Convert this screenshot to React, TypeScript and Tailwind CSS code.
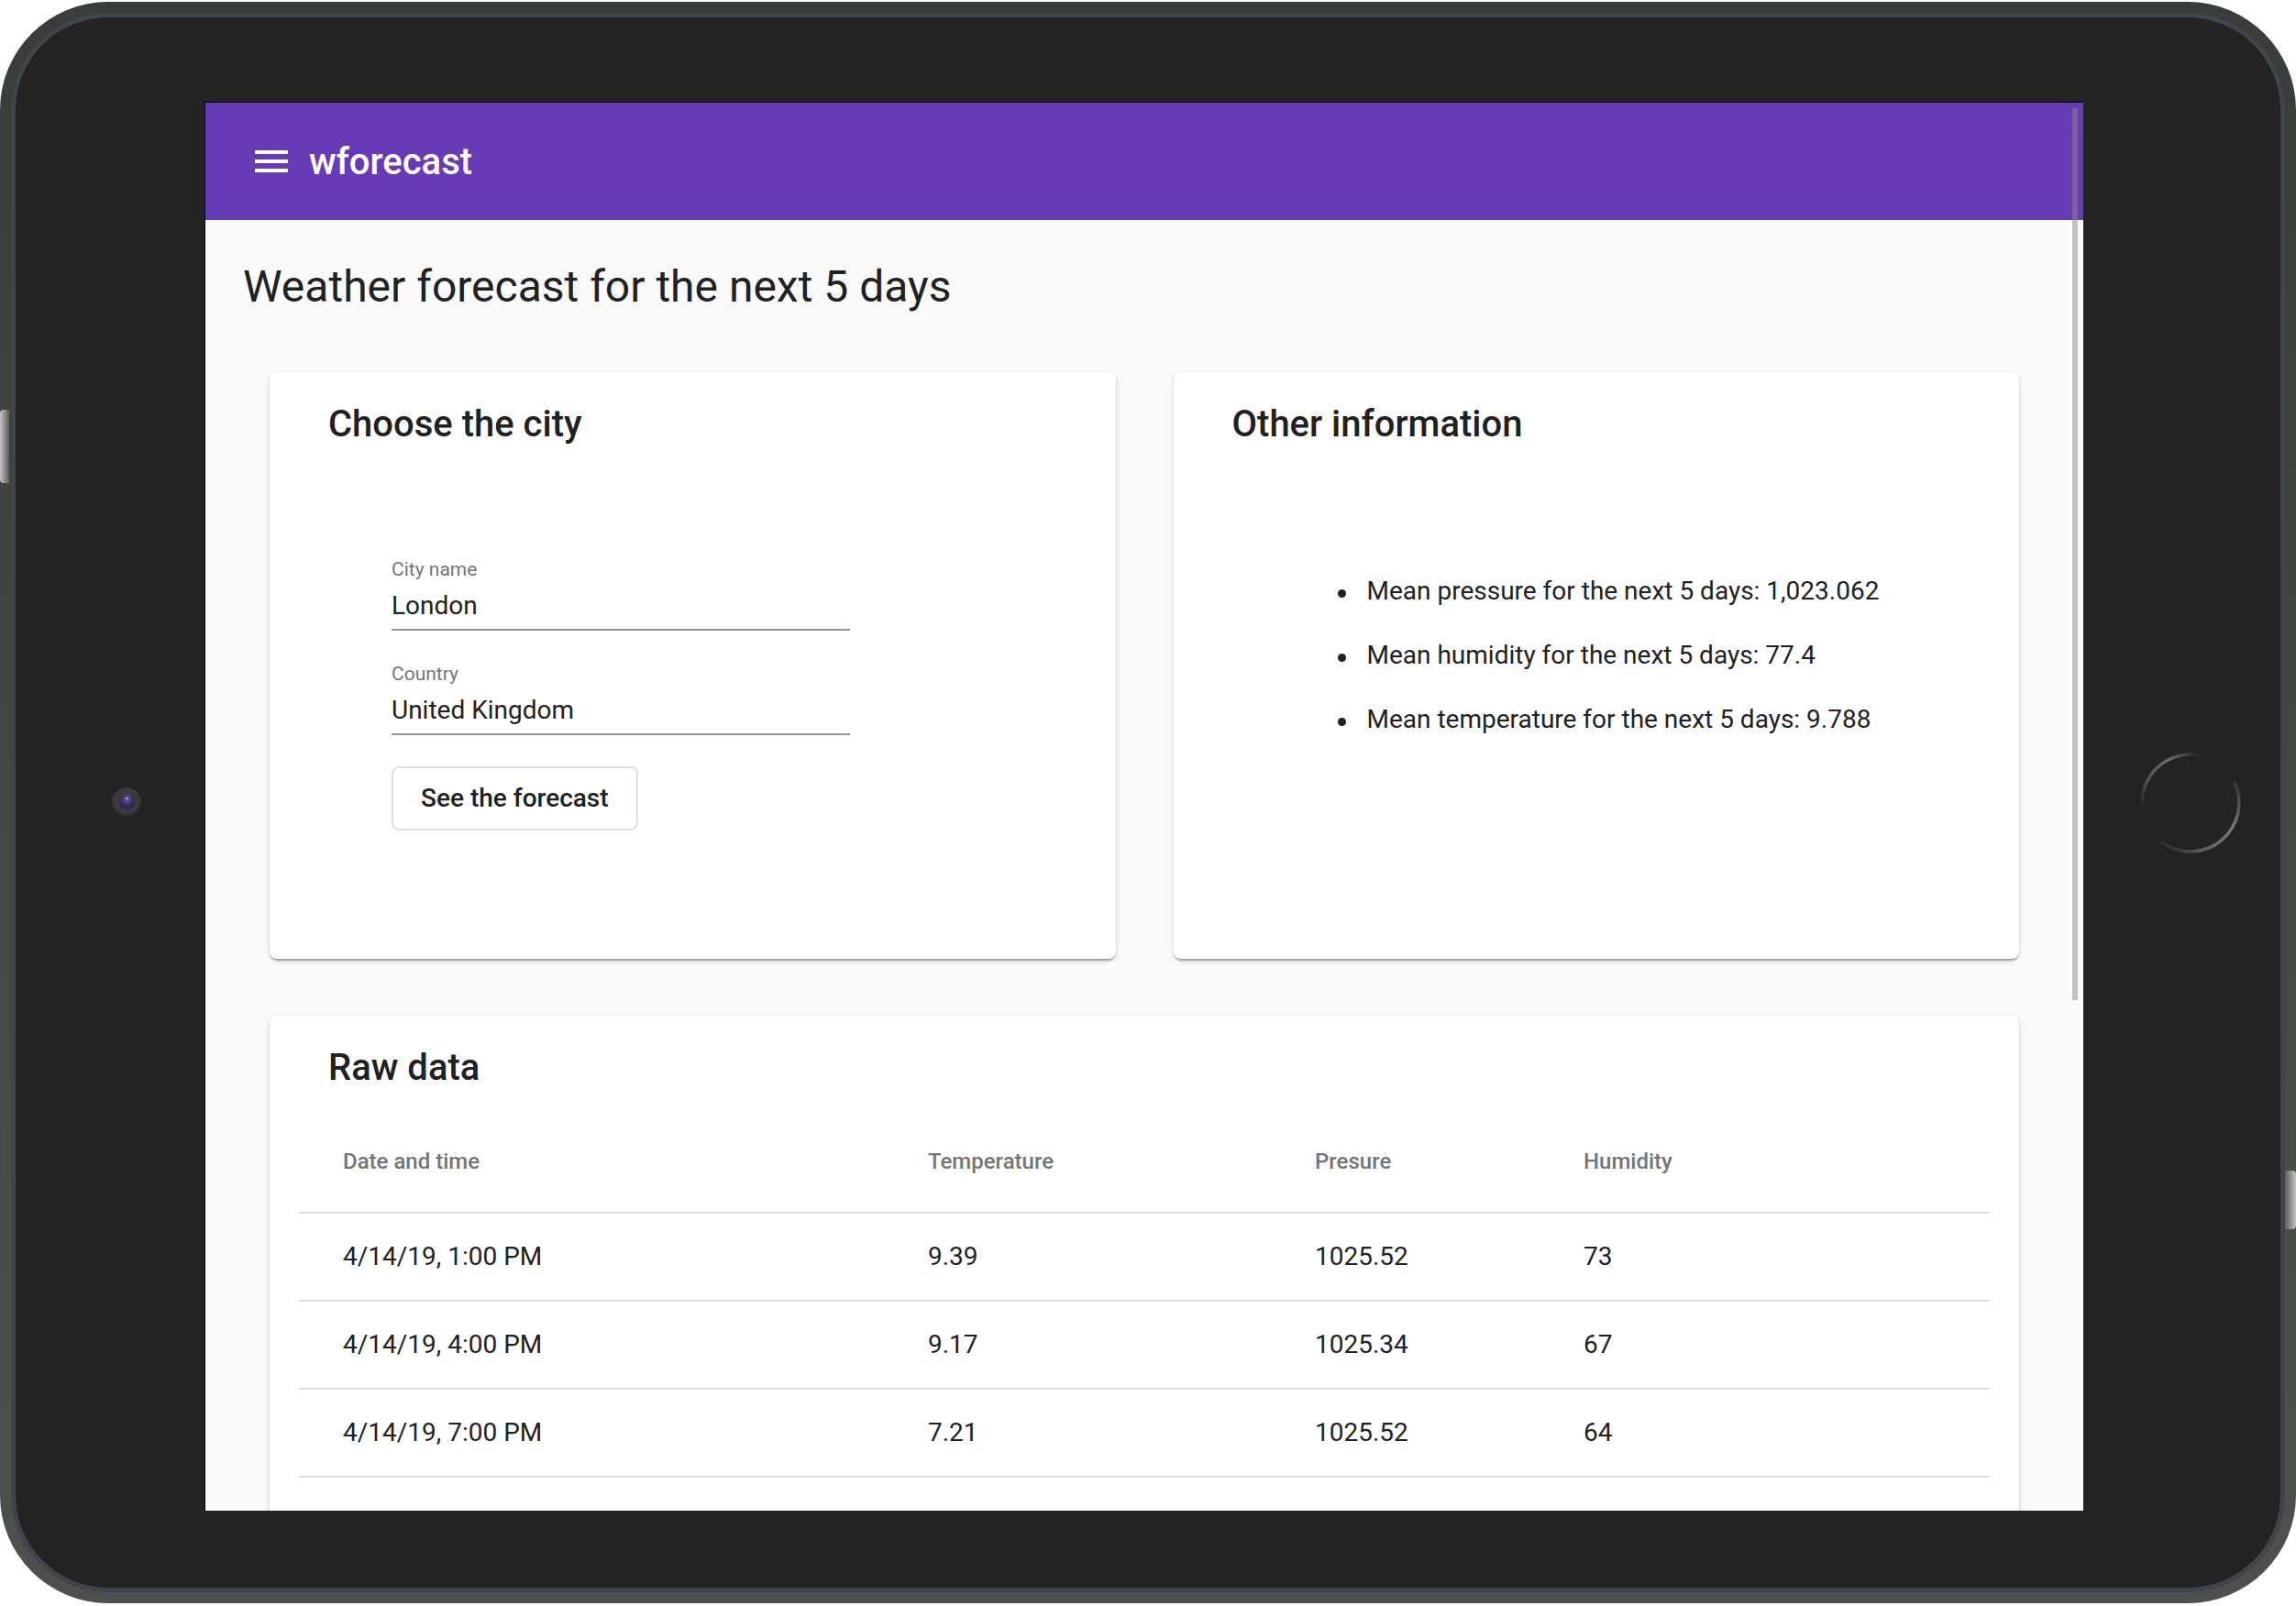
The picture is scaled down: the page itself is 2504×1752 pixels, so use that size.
import React from "react";

const rows = [
  { date: "4/14/19, 1:00 PM", temp: "9.39", pressure: "1025.52", humidity: "73" },
  { date: "4/14/19, 4:00 PM", temp: "9.17", pressure: "1025.34", humidity: "67" },
  { date: "4/14/19, 7:00 PM", temp: "7.21", pressure: "1025.52", humidity: "64" },
  { date: "4/14/19, 10:00 PM", temp: "6.48", pressure: "1025.91", humidity: "72" },
];

const info = [
  "Mean pressure for the next 5 days: 1,023.062",
  "Mean humidity for the next 5 days: 77.4",
  "Mean temperature for the next 5 days: 9.788",
];

const cardClass =
  "bg-white rounded-[8px] pt-[32px] shadow-[0_4px_2px_-2px_rgba(0,0,0,0.2),0_2px_2px_0_rgba(0,0,0,0.14),0_2px_6px_0_rgba(0,0,0,0.12)]";

function CardTitle({ children }: { children: React.ReactNode }) {
  return <h2 className="pl-[64px] mt-[1px] text-[40px] leading-[48px] font-medium text-[#212121]">{children}</h2>;
}

function Field({ label, value, className }: { label: string; value: string; className?: string }) {
  return (
    <div className={className}>
      <div className="text-[21px] leading-[24px] text-[#757575]">{label}</div>
      <div className="mt-[12px] pb-[9px] border-b-2 border-[#949494] text-[28px] leading-[32px] text-[#212121]">
        {value}
      </div>
    </div>
  );
}

function HomeButton() {
  return (
    <svg width="120" height="120" viewBox="0 0 120 120">
      <defs>
        <linearGradient id="arcA" x1="1" y1="0" x2="0" y2="1">
          <stop offset="0" stopColor="#6a6a6a" stopOpacity="0" />
          <stop offset="0.3" stopColor="#6a6a6a" stopOpacity="1" />
          <stop offset="0.7" stopColor="#5e5e5e" stopOpacity="0.8" />
          <stop offset="1" stopColor="#5e5e5e" stopOpacity="0" />
        </linearGradient>
        <linearGradient id="arcB" x1="1" y1="0" x2="0" y2="1">
          <stop offset="0" stopColor="#707070" stopOpacity="0.2" />
          <stop offset="0.35" stopColor="#777777" stopOpacity="1" />
          <stop offset="0.7" stopColor="#6a6a6a" stopOpacity="0.9" />
          <stop offset="1" stopColor="#5e5e5e" stopOpacity="0" />
        </linearGradient>
      </defs>
      <path d="M 71 8.2 A 53 53 0 0 0 7.2 64.6" fill="none" stroke="url(#arcA)" strokeWidth="3.5" />
      <path d="M 107.6 36.8 A 53 53 0 0 1 28.1 102.3" fill="none" stroke="url(#arcB)" strokeWidth="3.5" />
    </svg>
  );
}

export default function App() {
  return (
    <div className="relative w-[2504px] h-[1752px] bg-white font-['Roboto',sans-serif] overflow-hidden">
      {/* side buttons */}
      <div className="absolute left-0 top-[447px] w-[10px] h-[80px] rounded-l-[4px] bg-linear-to-r from-[#c4c4c4] to-[#5e605d]" />
      <div className="absolute right-0 top-[1277px] w-[12px] h-[64px] rounded-r-[4px] bg-linear-to-l from-[#c4c4c4] to-[#5e605d]" />

      <div className="mt-[2px] h-[1747px] rounded-[118px] bg-linear-to-b from-[#393d39] via-[#444744] to-[#4e504d] p-[12px]">
        <div className="h-full rounded-[106px] bg-[#40444d] p-[5px]">
          <div className="h-full rounded-[101px] bg-[#232323] flex items-center">
            <div className="w-[206px] flex pl-[105px] -mt-[2px]">
              <div className="w-[32px] h-[32px] rounded-full bg-[#3b3b3b] flex items-center justify-center shadow-[inset_0_-2px_3px_rgba(0,0,0,0.35)]">
                <div className="w-[17px] h-[17px] rounded-full bg-[radial-gradient(circle_at_50%_35%,#6a58a0_0%,#3b2e60_45%,#1d1830_100%)] flex justify-center">
                  <div className="mt-[4px] w-[3px] h-[2px] rounded-full bg-[#b9a9e8]" />
                </div>
              </div>
            </div>

            {/* screen */}
            <div className="self-start mt-[92px] relative w-[2049px] h-[1537px] border-t border-l border-black bg-[#fafafa] overflow-hidden">
              <header className="h-[128px] bg-[#673ab7] flex items-center pl-[48px] text-white">
                <svg width="48" height="48" viewBox="0 0 24 24" fill="#ffffff">
                  <path d="M3 18h18v-2H3v2zm0-5h18v-2H3v2zm0-7v2h18V6H3z" />
                </svg>
                <span className="ml-[17px] mt-[2px] text-[40px] font-medium">wforecast</span>
              </header>

              <h1 className="ml-[41px] mt-[41px] text-[48px] leading-[64px] text-[#212121]">
                Weather forecast for the next 5 days
              </h1>

              <div className="mt-[61px] px-[70px] grid grid-cols-2 gap-x-[63px]">
                <div className={`${cardClass} h-[640px]`}>
                  <CardTitle>Choose the city</CardTitle>
                  <div className="ml-[133px] mt-[122px] w-[500px]">
                    <Field label="City name" value="London" />
                    <Field label="Country" value="United Kingdom" className="mt-[35px]" />
                    <button className="mt-[34px] h-[70px] px-[30px] border-2 border-[#e0e0e0] rounded-[8px] bg-white text-[28px] font-medium text-[#212121]">
                      See the forecast
                    </button>
                  </div>
                </div>

                <div className={`${cardClass} h-[640px]`}>
                  <CardTitle>Other information</CardTitle>
                  <ul className="mt-[123px] pl-[179px] text-[28px] leading-[70px] text-[#212121]">
                    {info.map((t) => (
                      <li key={t} className="flex items-center">
                        <span className="mt-[4px] w-[9px] h-[9px] rounded-full bg-[#212121]" />
                        <span className="ml-[23px]">{t}</span>
                      </li>
                    ))}
                  </ul>
                </div>
              </div>

              <div className={`${cardClass} mt-[62px] mx-[70px] pb-[32px]`}>
                <CardTitle>Raw data</CardTitle>
                <div className="mt-[23px] mx-[32px]">
                  <div className="grid grid-cols-[686px_422px_293px_443px] h-[112px] items-center border-b-2 border-[#e0e0e0] text-[24px] font-medium text-[#757575]">
                    <div className="pl-[48px]">Date and time</div>
                    <div>Temperature</div>
                    <div>Presure</div>
                    <div>Humidity</div>
                  </div>
                  {rows.map((r) => (
                    <div
                      key={r.date}
                      className="grid grid-cols-[686px_422px_293px_443px] h-[96px] items-center border-b-2 border-[#e0e0e0] text-[28px] text-[#212121]"
                    >
                      <div className="pl-[48px]">{r.date}</div>
                      <div>{r.temp}</div>
                      <div>{r.pressure}</div>
                      <div>{r.humidity}</div>
                    </div>
                  ))}
                </div>
              </div>

              {/* overlay scrollbar */}
              <div className="absolute right-[6px] top-[6px] w-[6px] h-[973px] bg-[#888888]/50" />
            </div>

            <div className="flex-1 flex pl-[57px]">
              <HomeButton />
            </div>
          </div>
        </div>
      </div>
    </div>
  );
}
